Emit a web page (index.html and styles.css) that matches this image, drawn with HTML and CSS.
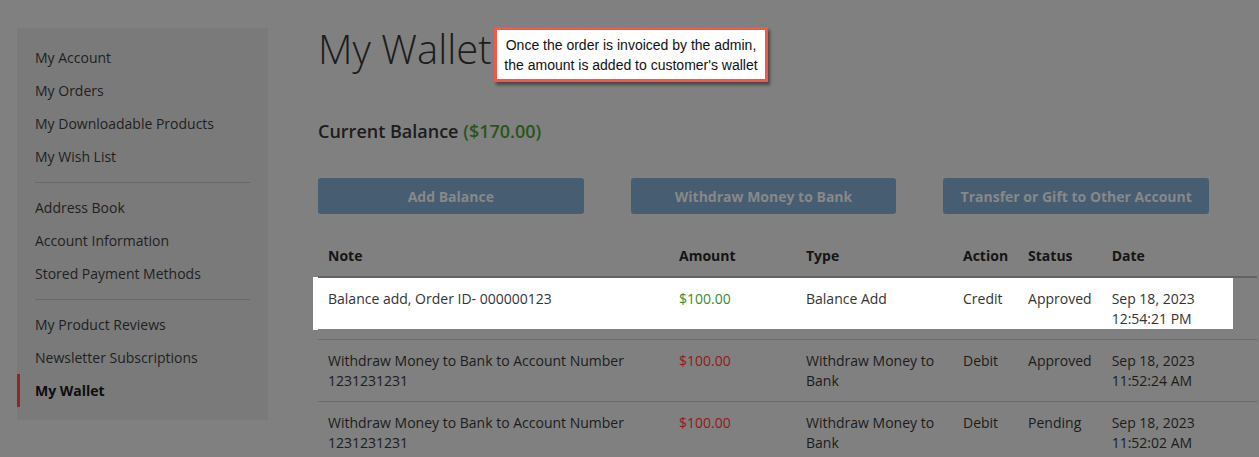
FILE: index.html
```html
<!DOCTYPE html>
<html lang="en">
<head>
  <meta charset="UTF-8" />
  <meta name="viewport" content="width=device-width, initial-scale=1.0"/>
  <title>My Wallet</title>
  <link rel="stylesheet" href="styles.css">
</head>
<body>

<div class="page">
  <aside class="sidebar">
    <ul class="nav">
      <li>My Account</li>
      <li>My Orders</li>
      <li>My Downloadable Products</li>
      <li>My Wish List</li>
      <li class="divider"></li>
      <li>Address Book</li>
      <li>Account Information</li>
      <li>Stored Payment Methods</li>
      <li class="divider"></li>
      <li>My Product Reviews</li>
      <li>Newsletter Subscriptions</li>
      <li class="current">My Wallet</li>
    </ul>
  </aside>

  <main class="content">
    <h1 class="page-title">My Wallet</h1>

    <div class="callout">
      Once the order is invoiced by the admin,<br>
      the amount is added to customer's wallet
    </div>

    <h2 class="balance">Current Balance <span class="credit">($170.00)</span></h2>

    <div class="actions">
      <button>Add Balance</button>
      <button>Withdraw Money to Bank</button>
      <button>Transfer or Gift to Other Account</button>
    </div>

    <table class="wallet">
      <thead>
        <tr>
          <th class="col-note">Note</th>
          <th class="col-amount">Amount</th>
          <th class="col-type">Type</th>
          <th class="col-action">Action</th>
          <th class="col-status">Status</th>
          <th class="col-date">Date</th>
        </tr>
      </thead>
      <tbody>
        <tr class="highlight">
          <td>Balance add, Order ID- 000000123</td>
          <td class="credit">$100.00</td>
          <td>Balance Add</td>
          <td>Credit</td>
          <td>Approved</td>
          <td>Sep 18, 2023<br>12:54:21 PM</td>
        </tr>
        <tr>
          <td>Withdraw Money to Bank to Account Number<br>1231231231</td>
          <td class="debit">$100.00</td>
          <td>Withdraw Money to Bank</td>
          <td>Debit</td>
          <td>Approved</td>
          <td>Sep 18, 2023<br>11:52:24 AM</td>
        </tr>
        <tr>
          <td>Withdraw Money to Bank to Account Number<br>1231231231</td>
          <td class="debit">$100.00</td>
          <td>Withdraw Money to Bank</td>
          <td>Debit</td>
          <td>Pending</td>
          <td>Sep 18, 2023<br>11:52:02 AM</td>
        </tr>
      </tbody>
    </table>
  </main>
</div>

</body>
</html>
```

FILE: styles.css
```css
* {
  box-sizing: border-box;
}

body {
  margin: 0;
  background: #808080;
  font-family: 'Open Sans', sans-serif;
  font-size: 14px;
  color: #1a1a1a;
  overflow: hidden;
}

.page {
  display: flex;
  gap: 50px;
  padding: 28px 0 0 17px;
  position: relative;
}

.sidebar {
  width: 251px;
  flex-shrink: 0;
  background: #7a7a7a;
  align-self: flex-start;
  padding: 13px 0 13px;
}

.nav {
  list-style: none;
  margin: 0;
  padding: 0;
}

.nav li {
  padding: 0 18px;
  line-height: 33px;
  color: #1f1f1f;
}

.nav li.divider {
  height: 1px;
  margin: 9px 18px 8px;
  padding: 0;
  background: #686868;
}

.nav li.current {
  font-weight: 700;
  color: #0d0d0d;
  border-left: 3px solid #8a2a22;
  padding-left: 15px;
}

.content {
  flex: 1;
  padding-right: 2px;
}

.page-title {
  margin: 0;
  font-weight: 300;
  font-size: 40px;
  line-height: 48px;
  margin-top: -3px;
  color: #1c1c1c;
}

.callout {
  position: absolute;
  left: 494px;
  top: 27px;
  width: 274px;
  height: 55px;
  border: 3px solid #f5574b;
  background: #fff;
  font-family: 'Liberation Sans', Arial, sans-serif;
  font-size: 14px;
  line-height: 20px;
  color: #111;
  text-align: center;
  padding-top: 5px;
  box-shadow: 2px 3px 3px rgba(0, 0, 0, 0.45);
}

.balance {
  margin: 46px 0 0;
  font-size: 18px;
  font-weight: 600;
  line-height: 24px;
  color: #1c1c1c;
}

.credit {
  color: #2a5519;
}

.actions {
  display: flex;
  gap: 47px;
  margin-top: 35px;
  width: 891px;
}

.actions button {
  flex: 1;
  height: 36px;
  border: none;
  border-radius: 3px;
  background: #465d72;
  color: #888;
  font-family: 'Open Sans', sans-serif;
  font-size: 14px;
  font-weight: 700;
}

.wallet {
  margin-top: 24px;
  width: 100%;
  border-collapse: collapse;
  text-align: left;
}

.wallet th {
  font-weight: 700;
  padding: 8px 10px 10px;
  line-height: 20px;
  border-bottom: 2px solid #636363;
  color: #151515;
}

.wallet td {
  padding: 11px 10px 10px;
  line-height: 20px;
  vertical-align: top;
  border-top: 1px solid #6c6c6c;
  color: #1c1c1c;
}

.col-note { width: 351px; }
.col-amount { width: 127px; }
.col-type { width: 157px; }
.col-action { width: 65px; }
.col-status { width: 83px; }

.wallet td.debit {
  color: #961818;
}

.wallet tr.highlight td {
  background: linear-gradient(#fff, #fff) no-repeat;
  background-size: 100% calc(100% - 10px);
  color: #333;
  border-top: none;
}

.wallet tr.highlight td:first-child {
  box-shadow: -10px -5px 0 -5px #fff;
}

.wallet tr.highlight td:last-child {
  background-size: calc(100% - 24px) calc(100% - 10px);
}

.wallet tr.highlight td.credit {
  color: #3a8a2a;
}
```
